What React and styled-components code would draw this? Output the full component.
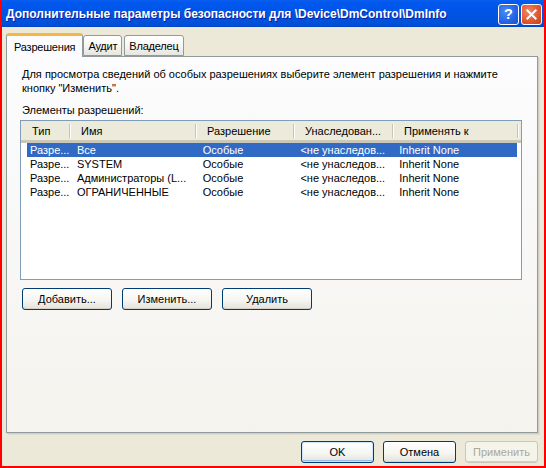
import React from "react";
import styled, { createGlobalStyle } from "styled-components";

const GlobalStyle = createGlobalStyle`
  html, body {
    margin: 0;
    padding: 0;
    background: #ece9d8;
  }
  body {
    font-family: "Liberation Sans", Arial, sans-serif;
    font-size: 11px;
    color: #000;
  }
`;

const columns = [
  { title: "Тип", width: 49 },
  { title: "Имя", width: 126 },
  { title: "Разрешение", width: 98 },
  { title: "Унаследован...", width: 99 },
  { title: "Применять к", width: 125 },
];

const entries = [
  ["Разре...", "Все", "Особые", "<не унаследов...", "Inherit None"],
  ["Разре...", "SYSTEM", "Особые", "<не унаследов...", "Inherit None"],
  ["Разре...", "Администраторы (L...", "Особые", "<не унаследов...", "Inherit None"],
  ["Разре...", "ОГРАНИЧЕННЫЕ", "Особые", "<не унаследов...", "Inherit None"],
];

export default function App() {
  return (
    <>
      <GlobalStyle />
      <Window>
        <TitleBar>
          <Title>Дополнительные параметры безопасности для \Device\DmControl\DmInfo</Title>
          <CaptionButtons>
            <CaptionButton>
              <svg width="21" height="21" viewBox="0 0 21 21">
                <text x="10.5" y="16" textAnchor="middle" fill="#fff"
                  fontFamily="Liberation Sans, Arial, sans-serif" fontWeight="bold" fontSize="16">?</text>
              </svg>
            </CaptionButton>
            <CaptionButton $close>
              <svg width="21" height="21" viewBox="0 0 21 21">
                <path d="M6 6 L15 15 M15 6 L6 15" stroke="#fff" strokeWidth="2.2" strokeLinecap="square" />
              </svg>
            </CaptionButton>
          </CaptionButtons>
        </TitleBar>

        <Body>
          <TabStrip>
            <TabItem $active>Разрешения</TabItem>
            <TabItem>Аудит</TabItem>
            <TabItem>Владелец</TabItem>
          </TabStrip>
          <Panel>
            <Description>
              Для просмотра сведений об особых разрешениях выберите элемент разрешения и нажмите
              кнопку "Изменить".
            </Description>
            <Label>Элементы разрешений:</Label>
            <ListBox>
              <HeaderRow>
                {columns.map((c) => (
                  <HeaderCell key={c.title} style={{ width: c.width }}>{c.title}</HeaderCell>
                ))}
              </HeaderRow>
              <Rows>
                {entries.map((row, i) => (
                  <Row key={i} $selected={i === 0}>
                    {row.map((cell, j) => (
                      <Cell key={j} style={{ width: j === 0 ? columns[0].width - 6 : columns[j].width }}>
                        {cell}
                      </Cell>
                    ))}
                  </Row>
                ))}
              </Rows>
            </ListBox>
            <ActionRow>
              <Button>Добавить...</Button>
              <Button>Изменить...</Button>
              <Button>Удалить</Button>
            </ActionRow>
          </Panel>
          <Footer>
            <Button $default $narrow>OK</Button>
            <Button $narrow>Отмена</Button>
            <Button $narrow disabled>Применить</Button>
          </Footer>
        </Body>
      </Window>
    </>
  );
}

const Window = styled.div`
  width: 546px;
  height: 468px;
  box-sizing: border-box;
  border: 2px solid #ff0000;
  border-top: none;
  display: flex;
  flex-direction: column;
  background: #ece9d8;
  overflow: hidden;
`;

const TitleBar = styled.div`
  height: 27px;
  flex: none;
  margin: 0 -2px 0 -2px;
  padding: 0 4px 0 6px;
  display: flex;
  align-items: center;
  justify-content: space-between;
  background: linear-gradient(to bottom, #0a5ff0 0%, #0058ee 10%, #0054e3 50%, #0050d8 90%, #0046c8 100%);
`;

const Title = styled.div`
  color: #fff;
  font-family: "Liberation Sans", Arial, sans-serif;
  font-weight: bold;
  font-size: 12px;
  text-shadow: 1px 1px 0 #0a1e9e;
  white-space: nowrap;
`;

const CaptionButtons = styled.div`
  display: flex;
  gap: 2px;
  padding-top: 1px;
`;

const CaptionButton = styled.div`
  width: 21px;
  height: 21px;
  box-sizing: border-box;
  border: 1px solid #fff;
  border-radius: 3px;
  display: flex;
  align-items: center;
  justify-content: center;
  background: ${(p) =>
    p.$close
      ? "radial-gradient(circle at 35% 35%, #f0896a 0%, #e4582f 55%, #c73e16 100%)"
      : "radial-gradient(circle at 35% 35%, #4a8cf7 0%, #2766e8 55%, #1650d4 100%)"};
  svg { display: block; }
`;

const Body = styled.div`
  flex: 1;
  display: flex;
  flex-direction: column;
  padding: 5px 4px 3px 4px;
`;

const TabStrip = styled.div`
  display: flex;
  align-items: flex-end;
  height: 24px;
  position: relative;
  z-index: 1;
`;

const TabItem = styled.div`
  box-sizing: border-box;
  height: ${(p) => (p.$active ? "24px" : "21px")};
  padding: ${(p) => (p.$active ? "0 7px 0 7px" : "0 4px")};
  margin-right: ${(p) => (p.$active ? "0" : "2px")};
  margin-bottom: ${(p) => (p.$active ? "-1px" : "0")};
  display: flex;
  align-items: center;
  border: 1px solid #919b9c;
  border-bottom: ${(p) => (p.$active ? "none" : "1px solid #919b9c")};
  border-top: ${(p) => (p.$active ? "3px solid #f5b742" : "1px solid #919b9c")};
  border-radius: 3px 3px 0 0;
  background: ${(p) =>
    p.$active ? "#fcfcfe" : "linear-gradient(to bottom, #ffffff 0%, #f7f7f4 50%, #e6e5de 100%)"};
  font-size: 11px;
  letter-spacing: -0.2px;
  white-space: nowrap;
`;

const Panel = styled.div`
  height: 377px;
  box-sizing: border-box;
  border: 1px solid #919b9c;
  background: linear-gradient(to bottom, #fcfcfe 0%, #f4f3ee 100%);
  box-shadow: 1px 1px 0 #d0cec4, 2px 2px 0 #e0ddd0;
  margin-right: 2px;
  padding: 10px 15px 0 13px;
  display: flex;
  flex-direction: column;
`;

const Description = styled.div`
  line-height: 14px;
  padding-left: 2px;
`;

const Label = styled.div`
  margin-top: 8px;
  line-height: 14px;
  padding-left: 2px;
`;

const ListBox = styled.div`
  margin-top: 3px;
  height: 160px;
  box-sizing: border-box;
  border: 1px solid #7f9db9;
  background: #fff;
  display: flex;
  flex-direction: column;
`;

const HeaderRow = styled.div`
  display: flex;
  height: 22px;
  box-sizing: border-box;
  background: #ebeadb;
  border-bottom: 3px solid;
  border-image: linear-gradient(to bottom, #e2decd 0%, #d6d2c2 50%, #cbc7b8 100%) 1;
`;

const HeaderCell = styled.div`
  box-sizing: border-box;
  padding-left: 11px;
  display: flex;
  align-items: center;
  position: relative;
  white-space: nowrap;
  &::after {
    content: "";
    position: absolute;
    right: 0;
    top: 3px;
    bottom: 2px;
    width: 1px;
    background: #c7c5b2;
    box-shadow: 1px 0 0 #fff;
  }
`;

const Rows = styled.div`
  padding: 0 4px 0 6px;
`;

const Row = styled.div`
  display: flex;
  height: 14px;
  align-items: center;
  background: ${(p) => (p.$selected ? "#316ac5" : "transparent")};
  color: ${(p) => (p.$selected ? "#fff" : "#000")};
`;

const Cell = styled.div`
  box-sizing: border-box;
  padding-left: 7px;
  white-space: nowrap;
  overflow: hidden;
  &:first-child { padding-left: 3px; }
`;

const ActionRow = styled.div`
  display: flex;
  gap: 10px;
  margin-top: 8px;
  padding-left: 2px;
`;

const Button = styled.button`
  width: ${(p) => (p.$narrow ? "73px" : "90px")};
  height: 22px;
  box-sizing: border-box;
  border: 1px solid ${(p) => (p.disabled ? "#c9c7ba" : "#003c74")};
  border-radius: 3px;
  background: ${(p) =>
    p.disabled ? "#f5f4ea" : "linear-gradient(to bottom, #ffffff 0%, #f4f4f0 60%, #e3e2da 100%)"};
  box-shadow: ${(p) =>
    p.$default ? "inset 0 0 0 1px #cee7ff, inset 0 -1px 0 1px #98b8ea" : "inset 0 -1px 0 #d6d0c5"};
  font-family: "Liberation Sans", Arial, sans-serif;
  font-size: 11px;
  color: ${(p) => (p.disabled ? "#aca899" : "#000")};
  padding: 0;
`;

const Footer = styled.div`
  display: flex;
  justify-content: flex-end;
  gap: 9px;
  margin-top: 8px;
  padding-right: 2px;
`;
